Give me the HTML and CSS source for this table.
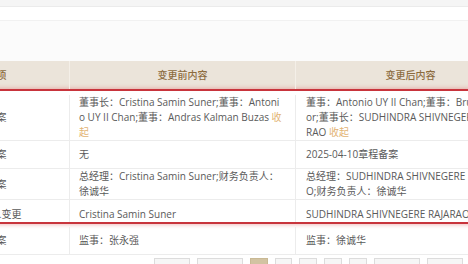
FILE: index.html
```html
<!DOCTYPE html>
<html lang="zh-CN">
<head>
<meta charset="utf-8">
<title>变更记录</title>
<link rel="stylesheet" href="styles.css">
</head>
<body>
<div class="top-strip"></div>
<div class="toolbar"></div>
<div class="spacer"></div>

<div class="table">
  <div class="row head">
    <div class="cell"><span class="val">变更事项</span></div>
    <div class="cell"><span class="val">变更前内容</span></div>
    <div class="cell"><span class="val">变更后内容</span></div>
  </div>

  <div class="group">
    <div class="row">
      <div class="cell"><span class="val">董事备案</span></div>
      <div class="cell"><span class="val">董事长：Cristina Samin Suner;董事：Antonio UY II Chan;董事：Andras Kalman Buzas <a class="fold">收起</a></span></div>
      <div class="cell"><span class="val">董事：Antonio UY II Chan;董事：Bruno Victor;董事长：SUDHINDRA SHIVNEGERE RAJARAO <a class="fold">收起</a></span></div>
    </div>
    <div class="row">
      <div class="cell"><span class="val">章程备案</span></div>
      <div class="cell"><span class="val">无</span></div>
      <div class="cell"><span class="val">2025-04-10章程备案</span></div>
    </div>
    <div class="row">
      <div class="cell"><span class="val">高管备案</span></div>
      <div class="cell"><span class="val">总经理：Cristina Samin Suner;财务负责人：徐诚华</span></div>
      <div class="cell"><span class="val">总经理：SUDHINDRA SHIVNEGERE RAJARAO;财务负责人：徐诚华</span></div>
    </div>
    <div class="row">
      <div class="cell"><span class="val">法定代表人变更</span></div>
      <div class="cell"><span class="val">Cristina Samin Suner</span></div>
      <div class="cell"><span class="val">SUDHINDRA SHIVNEGERE RAJARAO</span></div>
    </div>
  </div>

  <div class="row">
    <div class="cell"><span class="val">监事备案</span></div>
    <div class="cell"><span class="val">监事：张永强</span></div>
    <div class="cell"><span class="val">监事：徐诚华</span></div>
  </div>
</div>

<div class="pager">
  <a class="page text">首页</a>
  <a class="page text">上一页</a>
  <a class="page active">1</a>
  <a class="page">2</a>
  <a class="page">3</a>
  <a class="page">4</a>
  <a class="page">5</a>
  <a class="page text">下一页</a>
  <a class="page text">尾页</a>
</div>
</body>
</html>
```

FILE: styles.css
```css
html, body {
  margin: 0;
  padding: 0;
  background: #fff;
  overflow: hidden;
}

body {
  font-family: "Open Sans", "Noto Sans CJK SC", sans-serif;
  font-size: 10px;
  color: #5a5a5a;
}

/* page chrome above the table */
.top-strip {
  height: 6px;
  background: #f5f5f5;
  border-bottom: 1px solid #ebebeb;
}

.toolbar {
  height: 13px;
  background: #fff;
  border-bottom: 1px solid #f1f1f1;
}

.spacer {
  height: 40px;
  background: #fbfbfb;
}

/* change log table */
.table {
  width: 622px;
  margin-left: -96px;
}

.row {
  display: grid;
  grid-template-columns: 166px 226px 230px;
  border-bottom: 1px solid #ececec;
}

.cell {
  display: flex;
  align-items: center;
  min-height: 27px;
  padding: 0 13px 0 9px;
  line-height: 15px;
  border-right: 1px solid #ececec;
  word-break: break-all;
}

.row .cell:first-child {
  justify-content: center;
  padding: 0 9px;
}

.row .cell:last-child {
  padding: 0 17px 0 10px;
}

.head {
  background: #ebe4da;
  border-bottom: none;
}

.head .cell,
.head .cell:first-child,
.head .cell:last-child {
  height: 28px;
  min-height: 0;
  padding: 0;
  justify-content: center;
  color: #8d6c3f;
  font-weight: 500;
  border-right: 1px solid #f4efe8;
}

.fold {
  color: #e2b373;
  cursor: pointer;
}

/* highlighted block of changed rows */
.group {
  border-top: 2px solid #c8343c;
  border-bottom: 2px solid #c8343c;
  box-shadow: 0 0 4px 1px rgba(226, 110, 110, 0.45);
  padding-top: 4px;
}

.group .row:last-child {
  border-bottom: none;
}

.group .row:last-child .cell {
  min-height: 0;
  padding-top: 7px;
}

.group + .row {
  padding-top: 3px;
}

/* pagination */
.pager {
  display: flex;
  gap: 7px;
  margin-top: 3px;
  padding-left: 154px;
}

.page {
  display: block;
  height: 24px;
  padding: 9px 5px 0;
  box-sizing: border-box;
  line-height: 15px;
  border: 1px solid #dcdcdc;
  background: #f6f6f6;
  color: #666;
}

.page.text {
  padding: 9px 7px 0;
}

.page.active {
  background: #d2c3a2;
  border-color: #c9b994;
  color: #fff;
}
```
